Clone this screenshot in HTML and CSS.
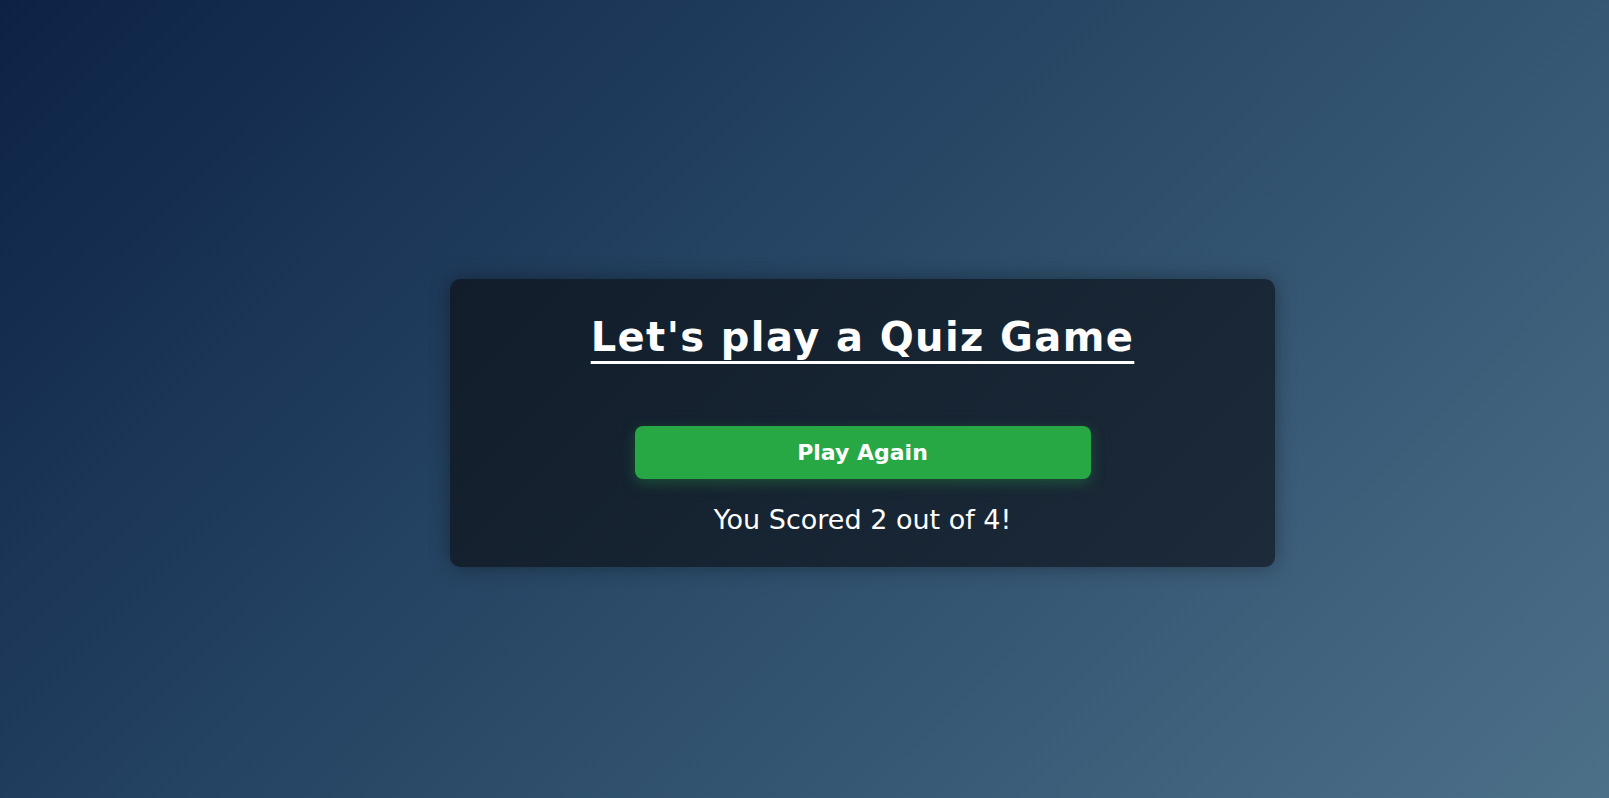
FILE: index.html
```html
<!DOCTYPE html>
<html>
<head>
<meta charset="utf-8">
<link rel="stylesheet" href="styles.css">
</head>
<body>
<div class="page">
  <div class="card">
    <h1 class="title">Let's play a Quiz Game</h1>
    <button class="btn">Play Again</button>
    <div class="score">You Scored 2 out of 4!</div>
  </div>
</div>
</body>
</html>
```
FILE: styles.css
```css
html, body {
  margin: 0;
  height: 100%;
}
body {
  background: linear-gradient(135deg, #0c2245 0%, #2a4a68 50%, #4d7089 100%);
  font-family: "DejaVu Sans", Verdana, sans-serif;
  color: #fff;
  overflow: hidden;
}
.page {
  padding: 279px 0 0 450px;
}
.card {
  width: 825px;
  height: 288px;
  box-sizing: border-box;
  background: linear-gradient(135deg, #111d2b 0%, #1c2a39 100%);
  border-radius: 10px;
  box-shadow: 0 0 20px rgba(0, 0, 0, 0.35);
  display: flex;
  flex-direction: column;
  align-items: center;
  padding-top: 34px;
}
.title {
  margin: 0;
  font-size: 40px;
  font-weight: bold;
  line-height: 48px;
  letter-spacing: 1.4px;
  text-decoration: underline;
  text-decoration-skip-ink: none;
  text-underline-offset: 10px;
  text-decoration-thickness: 3px;
}
.btn {
  margin-top: 65px;
  width: 456px;
  height: 53px;
  border: none;
  border-radius: 8px;
  background: #28a745;
  color: #fff;
  font-family: "DejaVu Sans", Verdana, sans-serif;
  font-weight: bold;
  font-size: 22px;
  box-shadow: 0 4px 14px rgba(40, 167, 69, 0.35);
}
.score {
  margin-top: 25px;
  font-size: 27px;
}
```
